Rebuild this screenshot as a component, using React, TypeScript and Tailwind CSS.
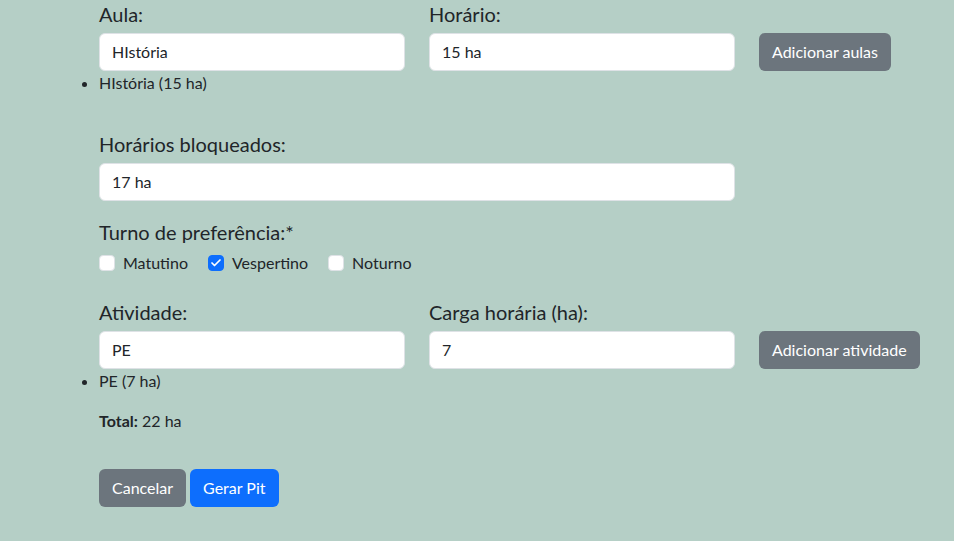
import { Check } from "lucide-react";

/* ─────────────────────────────── data ─── */

const aulas = [{ nome: "HIstória", ha: 15 }];
const atividades = [{ nome: "PE", ha: 7 }];

const turnos = [
  { label: "Matutino", checked: false },
  { label: "Vespertino", checked: true },
  { label: "Noturno", checked: false },
];

const FONT = "font-['Lato','Liberation_Sans',sans-serif]";

/* ─────────────────────────────── page ─── */

const App = () => {
  return (
    <div className={`min-h-[541px] w-full bg-[#b5cfc6] text-[#212529] ${FONT}`}>
      <div className="pl-[99px] pt-[2px]">
        {/* ── Aulas ── */}
        <div className="flex items-end gap-6">
          <Field label="Aula:" value="HIstória" />
          <Field label="Horário:" value="15 ha" />
          <Button tone="gray">Adicionar aulas</Button>
        </div>
        <BulletList items={aulas.map((a) => `${a.nome} (${a.ha} ha)`)} />

        {/* ── Bloqueados ── */}
        <div className="mt-[38px]">
          <Label>Horários bloqueados:</Label>
          <Input value="17 ha" className="w-[636px]" />
        </div>

        {/* ── Turno ── */}
        <div className="mt-[19px]">
          <Label>Turno de preferência:*</Label>
          <div className="mt-[2px] flex items-center gap-[20px] text-[16px]">
            {turnos.map((t) => (
              <label key={t.label} className="flex items-center gap-2">
                <span
                  className={`flex h-4 w-4 items-center justify-center rounded-[4px] border ${
                    t.checked ? "border-[#0d6efd] bg-[#0d6efd]" : "border-[#dee2e6] bg-white"
                  }`}
                >
                  {t.checked && <Check className="h-3 w-3 text-white" strokeWidth={3.5} />}
                </span>
                {t.label}
              </label>
            ))}
          </div>
        </div>

        {/* ── Atividades ── */}
        <div className="mt-[25px] flex items-end gap-6">
          <Field label="Atividade:" value="PE" />
          <Field label="Carga horária (ha):" value="7" />
          <Button tone="gray">Adicionar atividade</Button>
        </div>
        <BulletList items={atividades.map((a) => `${a.nome} (${a.ha} ha)`)} />

        <p className="mt-[17px] text-[16px]">
          <strong>Total:</strong> 22 ha
        </p>

        {/* ── Ações ── */}
        <div className="mt-[36px] flex gap-1">
          <Button tone="gray">Cancelar</Button>
          <Button tone="blue">Gerar Pit</Button>
        </div>
      </div>
    </div>
  );
};

/* ─────────────────────────────── sub-components ─── */

const Label = ({ children }: { children: React.ReactNode }) => (
  <div className="mb-[7px] text-[20px] leading-[24px]">{children}</div>
);

const Input = ({ value, className = "" }: { value: string; className?: string }) => (
  <div
    className={`flex h-[38px] items-center rounded-[6px] border border-[#dee2e6] bg-white px-3 text-[16px] ${className}`}
  >
    {value}
  </div>
);

const Field = ({ label, value }: { label: string; value: string }) => (
  <div className="w-[306px]">
    <Label>{label}</Label>
    <Input value={value} />
  </div>
);

const Button = ({ tone, children }: { tone: "gray" | "blue"; children: React.ReactNode }) => (
  <button
    className={`h-[38px] rounded-[6px] px-[13px] text-[16px] text-white ${
      tone === "blue" ? "bg-[#0d6efd]" : "bg-[#6c757d]"
    }`}
  >
    {children}
  </button>
);

const BulletList = ({ items }: { items: string[] }) => (
  <ul className="mt-[1px] list-disc text-[16px] leading-[22px]">
    {items.map((i) => (
      <li key={i}>{i}</li>
    ))}
  </ul>
);

export default App;
